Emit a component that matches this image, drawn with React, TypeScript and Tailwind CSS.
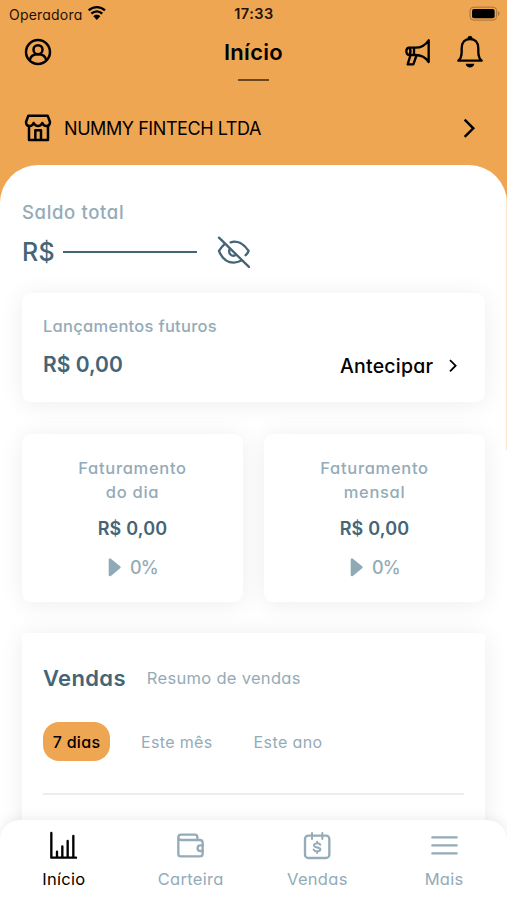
import type { ReactNode } from "react";

function Card({ className = "", children }: { className?: string; children: ReactNode }) {
  return (
    <section className={`bg-white shadow-[0_2px_24px_rgba(0,0,0,0.075)] ${className}`}>
      {children}
    </section>
  );
}

function StatusBar() {
  return (
    <div className="grid h-7 grid-cols-3 items-center pr-[6px] pl-[9px] text-[#1f1206]">
      <div className="flex items-center gap-[5px]">
        <span className="text-[14px] tracking-[0.2px]">Operadora</span>
        <svg viewBox="262 15 60 46" className="mb-[2px] h-[15.3px] w-5" fill="none" stroke="#000" strokeWidth="7">
          <path d="M267 31c14-13 35-13 49 0" />
          <path d="M275 41c10-9 23-9 33 0" />
          <path d="M281 49c6-6 15-6 21 0l-10.500 11z" fill="#000" stroke="none" />
        </svg>
      </div>
      <span className="pr-[2px] text-center text-[14.500px] font-semibold tracking-[0.500px]">17:33</span>
      <svg viewBox="650 16 96 46" className="mb-px h-[15.300px] w-8 justify-self-end">
        <rect x="653" y="19.500" width="80" height="39" rx="11" fill="none" stroke="#a57339" strokeWidth="3" />
        <rect x="659" y="25" width="68" height="28" rx="6" fill="#000" />
        <path d="M737 32c6 1 6 13 0 14z" fill="#a57339" />
      </svg>
    </div>
  );
}

function Header() {
  return (
    <header>
      <div className="grid h-12 grid-cols-3 items-center px-[22px]">
        <svg viewBox="66 108 96 96" className="size-8" fill="none" stroke="#000" strokeWidth="7.500">
          <circle cx="114" cy="156" r="36" />
          <circle cx="114" cy="149" r="13.500" />
          <path d="M89 182c2-13 12-19 25-19s23 6 25 19" />
        </svg>
        <h1 className="text-center text-[22px] font-semibold tracking-[0.300px]">Início</h1>
        <div className="flex items-center justify-end gap-[22px]">
          <svg viewBox="448 108 90 96" className="h-8 w-[30px]" fill="none" stroke="#000" strokeWidth="7" strokeLinecap="round" strokeLinejoin="round">
            <path d="M525 121v65c-9-14-24-21-40-21h-18c-6 0-9-5-9-11s3-11 9-11h18c16 0 31-8 40-22z" />
            <path d="M481 144v20M468 144c3 6 3 14 0 20" />
            <path d="M470 167l-8 26h17l9-25" />
          </svg>
          <svg viewBox="605 104 90 106" className="h-[35.300px] w-[30px]" fill="none" stroke="#000" strokeWidth="7" strokeLinejoin="round">
            <path d="M615 184c7-6 10-14 10-27v-10c0-18 10-28 25-28s25 10 25 28v10c0 13 3 21 10 27z" />
            <path d="M644 118v-4c0-4 12-4 12 0v4z" fill="#000" strokeWidth="2" />
            <path d="M637 193h26c-2 15-24 15-26 0z" fill="#000" stroke="none" />
          </svg>
        </div>
      </div>
      <div className="mx-auto mt-[3px] h-[2px] w-[31px] bg-[#6a4921]" />
      <div className="mt-[27px] mb-[17px] flex h-10 items-center pr-[30px] pl-[24px]">
        <svg viewBox="72 340 84 88" className="h-[29.300px] w-7" fill="none" stroke="#000" strokeWidth="7.500" strokeLinejoin="round">
          <path d="M85 348h58l7 19c0 8-4 12-11 12-6 0-10-4-12-9-3 6-7 9-13 9s-10-3-13-9c-2 5-6 9-12 9-7 0-11-4-11-12z" />
          <path d="M87 378v43h57v-43" />
          <path d="M106 421v-29h17v29" />
        </svg>
        <span className="ml-[12px] text-[18px] tracking-[-0.430px]">NUMMY FINTECH LTDA</span>
        <svg viewBox="628 350 44 68" className="ml-auto h-[22.600px] w-[14.600px]" fill="none" stroke="#000" strokeWidth="7.500">
          <path d="M636 358l26 26-26 26" />
        </svg>
      </div>
    </header>
  );
}

function Billing({ period }: { period: string }) {
  return (
    <Card className="flex h-[168px] flex-col items-center rounded-[9px] pt-[22px]">
      <h2 className="text-center text-[16.500px] leading-6 font-medium tracking-[0.700px] text-[#94abb8]">
        Faturamento
        <br />
        {period}
      </h2>
      <p className="mt-[13px] text-[18px] leading-6 font-semibold tracking-[0.200px] text-[#446577]">R$ 0,00</p>
      <div className="mt-[15px] flex h-6 items-center gap-[8px] pl-px text-[#94abb8]">
        <svg viewBox="328 380 42 62" className="mb-[2px] h-[20.600px] w-[14px]" fill="#8faab6" stroke="#8faab6" strokeWidth="8" strokeLinejoin="round">
          <path d="M334 388v46l28-23z" />
        </svg>
        <span className="text-[18px] leading-6 font-medium tracking-[-0.800px]">0%</span>
      </div>
    </Card>
  );
}

function NavItem({ label, active = false, children }: { label: string; active?: boolean; children: ReactNode }) {
  return (
    <a className={`flex flex-1 flex-col items-center pt-[11px] ${active ? "text-black" : "text-[#94abb8]"}`}>
      <svg viewBox="0 0 90 90" className="size-[30px]" fill="none" stroke="currentColor" strokeWidth="7" strokeLinecap="round" strokeLinejoin="round">
        {children}
      </svg>
      <span className="mt-[6px] pl-px text-[16.500px] leading-6 tracking-[0.300px]">{label}</span>
    </a>
  );
}

export default function App() {
  return (
    <div className="relative h-[900px] w-[507px] overflow-hidden bg-[#efa652] font-['Inter','Liberation_Sans',sans-serif] text-black [font-feature-settings:'cv11']">
      <StatusBar />
      <Header />
      <main className="h-[735px] rounded-t-[38px] bg-white px-[22px] pt-[35px]">
        <h2 className="text-[18.500px] leading-6 font-medium tracking-[0.650px] text-[#94abb8]">Saldo total</h2>
        <div className="mt-3 flex h-8 items-center text-[#446577]">
          <span className="text-[25px] leading-8 font-medium tracking-[0.300px]">R$</span>
          <span className="-mt-px ml-[8px] h-[2px] w-[134px] bg-[#446577]" />
          <svg viewBox="648 250 110 110" className="ml-[19px] size-[36.600px]" fill="none" stroke="currentColor" strokeWidth="7" strokeLinecap="round" strokeLinejoin="round">
            <path d="M657 261l90 88" />
            <path d="M692 275c20-7 40 5 54 26-2 5-5 9-9 13" />
            <path d="M673 281c-6 5-11 12-16 20 8 20 24 35 44 35 9 0 16-2 23-6" />
            <path d="M689 296c-5 12 6 24 18 17" />
          </svg>
        </div>

        <Card className="mt-[25px] h-[109px] rounded-[9px] px-[21px] pt-[21px]">
          <h2 className="text-[16.500px] leading-6 font-medium tracking-[0.270px] text-[#94abb8]">Lançamentos futuros</h2>
          <div className="mt-[11px] flex h-8 items-center">
            <span className="text-[21px] font-semibold text-[#446577]">R$ 0,00</span>
            <span className="mt-[3px] ml-auto text-[19.500px] font-medium tracking-[0.250px]">Antecipar</span>
            <svg viewBox="586 236 32 46" className="mt-[2px] mr-[5px] ml-[15px] h-[15.300px] w-[10.600px]" fill="none" stroke="#000" strokeWidth="5.500">
              <path d="M592 242l17 17-17 17" />
            </svg>
          </div>
        </Card>

        <div className="mt-8 grid grid-cols-2 gap-[21px]">
          <Billing period="do dia" />
          <Billing period="mensal" />
        </div>

        <Card className="mt-[31px] h-[280px] rounded-[4px] px-[21px] pt-[33px]">
          <div className="flex h-6 items-center">
            <h2 className="text-[22px] font-semibold tracking-[0.350px] text-[#446577]">Vendas</h2>
            <span className="ml-[21px] text-[16.500px] tracking-[0.300px] text-[#94abb8]">Resumo de vendas</span>
          </div>
          <div className="mt-8 flex h-[39px] items-center text-[16px] text-[#94abb8]">
            <span className="flex h-[39px] w-[67px] items-center justify-center rounded-[16px] bg-[#efa652] font-medium tracking-[0.300px] text-black">
              7 dias
            </span>
            <span className="ml-[31px] tracking-[0.350px]">Este mês</span>
            <span className="ml-[41px] tracking-[0.400px]">Este ano</span>
          </div>
          <div className="mt-8 h-[2px] bg-[#e9edef]" />
        </Card>
      </main>

      <div className="absolute top-[200px] right-0 h-[250px] w-px bg-[#f8e6cc]" />

      <nav className="absolute inset-x-0 bottom-0 flex h-20 rounded-t-[20px] bg-white shadow-[0_0_14px_rgba(0,0,0,0.09)]">
        <NavItem label="Início" active>
          <path d="M10 6v74h74M27 62v18M43 46v34M59 30v50M76 15v65" />
        </NavItem>
        <NavItem label="Carteira">
          <path d="M67 27v-9c0-5-3-7-7-7H18c-5 0-8 3-8 8s3 8 8 8h56c6 0 9 3 9 8v33c0 6-3 8-9 8H18c-5 0-8-3-8-8V19" />
          <path d="M83 43h-7c-11 0-11 17 0 17h7" />
        </NavItem>
        <NavItem label="Vendas">
          <rect x="9" y="14" width="73" height="67" rx="10" />
          <path strokeWidth="6" d="M30 6v18M61 6v18M45.500 32v5M45.500 61v5M55 41c-4-6-19-5-19 2 0 9 19 4 19 12 0 8-16 8-20 1" />
        </NavItem>
        <NavItem label="Mais">
          <path d="M10 19h73M10 43h73M10 67h73" />
        </NavItem>
      </nav>
    </div>
  );
}
